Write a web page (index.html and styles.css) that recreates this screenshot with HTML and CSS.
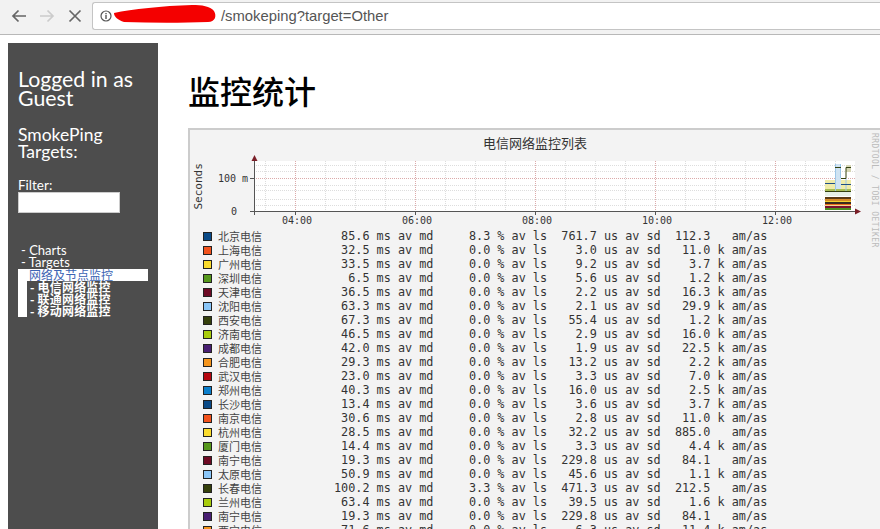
FILE: index.html
```html
<!DOCTYPE html>
<html lang="zh-CN">
<head>
  <title>SmokePing</title>
  <meta charset="utf-8"/>
  <link rel="stylesheet" href="styles.css">
</head>
<body>
  <div class="toolbar">
    <svg class="nav" width="90" height="34" viewBox="0 0 90 34">
      <path d="M25 16H12M17.500 10.500L12 16l5.500 5.500" fill="none" stroke="#666" stroke-width="1.700"/>
      <path d="M39 16H52M46.500 10.500L52 16l-5.500 5.500" fill="none" stroke="#ccc" stroke-width="1.700"/>
      <path d="M68.500 10.500l11 11M79.500 10.500l-11 11" fill="none" stroke="#666" stroke-width="1.700"/>
    </svg>
    <div class="urlbar">
      <svg class="info" width="12" height="12" viewBox="0 0 12 12">
        <circle cx="6" cy="6" r="5" fill="none" stroke="#555" stroke-width="1.200"/>
        <path d="M6 5v4M6 3v1.200" stroke="#555" stroke-width="1.400"/>
      </svg>
      <span class="url">/smokeping?target=Other</span>
      <svg class="scribble" width="106" height="20" viewBox="0 0 106 20">
        <path d="M2 9C20 5 50 2 80 1c10 0 18 1 22 6 3 5 1 11-6 11C70 19 40 19 12 18 6 16 2 13 2 9z" fill="#f40000"/>
      </svg>
    </div>
  </div>

  <div class="page">
    <aside class="sidebar">
      <h2 class="login">Logged in as Guest</h2>
      <h3 class="targets">SmokePing Targets:</h3>
      <label class="filter-label" for="filter">Filter:</label>
      <input class="filter" id="filter" type="text">
      <ul class="menu">
        <li>- Charts</li>
        <li>- Targets</li>
      </ul>
      <div class="submenu">
        <div class="current">网络及节点监控</div>
        <ul class="children">
          <li>- 电信网络监控</li>
          <li>- 联通网络监控</li>
          <li>- 移动网络监控</li>
        </ul>
      </div>
    </aside>

    <main class="content">
      <h1 class="title">监控统计</h1>
      <section class="graph">
        <div class="graph-title">电信网络监控列表</div>
        <div class="rrdtool">RRDTOOL / TOBI OETIKER</div>
        <svg class="plot" width="690" height="76" viewBox="0 0 690 76">
          <rect x="64" y="10" width="601" height="50" fill="#fff"/>
          <g stroke="#ddd" stroke-dasharray="1 1">
            <path d="M64 14.500H665M64 20.500H665M64 34.500H665M64 39.500H665M64 48.500H665M64 54.500H665"/>
            <path d="M75.500 10V60M135.500 10V60M165.500 10V60M195.500 10V60M255.500 10V60M285.500 10V60M315.500 10V60M375.500 10V60M405.500 10V60M435.500 10V60M495.500 10V60M525.500 10V60M555.500 10V60M615.500 10V60M645.500 10V60"/>
          </g>
          <g stroke="#dcaaaa" stroke-dasharray="1 1">
            <path d="M64 27.500H665"/>
            <path d="M105.500 10V60M225.500 10V60M345.500 10V60M465.500 10V60M585.500 10V60"/>
          </g>
          <rect x="635" y="29" width="26" height="12" fill="#efeba8"/>
          <rect x="645" y="13" width="6" height="28" fill="#cfe3f2"/>
          <rect x="656" y="14" width="5" height="7" fill="#d6d6b4"/>
          <rect x="635" y="38" width="26" height="3" fill="#a7bd55"/>
          <rect x="635" y="41" width="26" height="4" fill="#e6f0e6"/>
          <g fill="none">
            <path d="M645.500 13v28M650.500 13v14M656 27v13" stroke="#9cc7e8"/>
            <path d="M645 16.500h6M651 27.500h5M656 27V16.500h5M635 40.500h26" stroke="#33400f"/>
            <path d="M635 32.500h10M651 33.500h10" stroke="#1f4f85"/>
          </g>
          <rect x="635" y="46" width="26" height="2" fill="#5a3a14"/>
          <rect x="635" y="48" width="26" height="2" fill="#d48a28"/>
          <rect x="635" y="50" width="26" height="1" fill="#f2d030"/>
          <rect x="635" y="51" width="26" height="2" fill="#3a2a20"/>
          <rect x="635" y="53" width="26" height="1" fill="#e86a20"/>
          <rect x="635" y="54" width="26" height="1" fill="#f2d78a"/>
          <rect x="635" y="55" width="26" height="2" fill="#7a1030"/>
          <rect x="635" y="57" width="26" height="2" fill="#4a8f20"/>
          <g fill="none" stroke="#555">
            <path d="M60 60.500H666M64.500 10V64M60 27.500H64"/>
            <path d="M105.500 60v4M225.500 60v4M345.500 60v4M465.500 60v4M585.500 60v4"/>
          </g>
          <path d="M64.500 4l-3 6h6z" fill="#7a1f28"/>
          <path d="M671 60.500l-6-3v6z" fill="#7a1f28"/>
          <text class="axis seconds" x="12" y="58.500" transform="rotate(-90 12 58.500)">Seconds</text>
          <text class="axis" x="28" y="31">100 m</text>
          <text class="axis" x="41" y="64">0</text>
          <text class="axis" x="92" y="73">04:00</text>
          <text class="axis" x="212" y="73">06:00</text>
          <text class="axis" x="332" y="73">08:00</text>
          <text class="axis" x="452" y="73">10:00</text>
          <text class="axis" x="572" y="73">12:00</text>
        </svg>
        <div class="legend">
          <div class="row"><i class="sw c1"></i><span class="name">北京电信</span><pre> 85.6 ms av md     8.3 % av ls  761.7 us av sd  112.3   am/as</pre></div>
          <div class="row"><i class="sw c2"></i><span class="name">上海电信</span><pre> 32.5 ms av md     0.0 % av ls    3.0 us av sd   11.0 k am/as</pre></div>
          <div class="row"><i class="sw c3"></i><span class="name">广州电信</span><pre> 33.5 ms av md     0.0 % av ls    9.2 us av sd    3.7 k am/as</pre></div>
          <div class="row"><i class="sw c4"></i><span class="name">深圳电信</span><pre>  6.5 ms av md     0.0 % av ls    5.6 us av sd    1.2 k am/as</pre></div>
          <div class="row"><i class="sw c5"></i><span class="name">天津电信</span><pre> 36.5 ms av md     0.0 % av ls    2.2 us av sd   16.3 k am/as</pre></div>
          <div class="row"><i class="sw c6"></i><span class="name">沈阳电信</span><pre> 63.3 ms av md     0.0 % av ls    2.1 us av sd   29.9 k am/as</pre></div>
          <div class="row"><i class="sw c7"></i><span class="name">西安电信</span><pre> 67.3 ms av md     0.0 % av ls   55.4 us av sd    1.2 k am/as</pre></div>
          <div class="row"><i class="sw c8"></i><span class="name">济南电信</span><pre> 46.5 ms av md     0.0 % av ls    2.9 us av sd   16.0 k am/as</pre></div>
          <div class="row"><i class="sw c9"></i><span class="name">成都电信</span><pre> 42.0 ms av md     0.0 % av ls    1.9 us av sd   22.5 k am/as</pre></div>
          <div class="row"><i class="sw c10"></i><span class="name">合肥电信</span><pre> 29.3 ms av md     0.0 % av ls   13.2 us av sd    2.2 k am/as</pre></div>
          <div class="row"><i class="sw c11"></i><span class="name">武汉电信</span><pre> 23.0 ms av md     0.0 % av ls    3.3 us av sd    7.0 k am/as</pre></div>
          <div class="row"><i class="sw c12"></i><span class="name">郑州电信</span><pre> 40.3 ms av md     0.0 % av ls   16.0 us av sd    2.5 k am/as</pre></div>
          <div class="row"><i class="sw c1"></i><span class="name">长沙电信</span><pre> 13.4 ms av md     0.0 % av ls    3.6 us av sd    3.7 k am/as</pre></div>
          <div class="row"><i class="sw c2"></i><span class="name">南京电信</span><pre> 30.6 ms av md     0.0 % av ls    2.8 us av sd   11.0 k am/as</pre></div>
          <div class="row"><i class="sw c3"></i><span class="name">杭州电信</span><pre> 28.5 ms av md     0.0 % av ls   32.2 us av sd  885.0   am/as</pre></div>
          <div class="row"><i class="sw c4"></i><span class="name">厦门电信</span><pre> 14.4 ms av md     0.0 % av ls    3.3 us av sd    4.4 k am/as</pre></div>
          <div class="row"><i class="sw c5"></i><span class="name">南宁电信</span><pre> 19.3 ms av md     0.0 % av ls  229.8 us av sd   84.1   am/as</pre></div>
          <div class="row"><i class="sw c6"></i><span class="name">太原电信</span><pre> 50.9 ms av md     0.0 % av ls   45.6 us av sd    1.1 k am/as</pre></div>
          <div class="row"><i class="sw c7"></i><span class="name">长春电信</span><pre>100.2 ms av md     3.3 % av ls  471.3 us av sd  212.5   am/as</pre></div>
          <div class="row"><i class="sw c8"></i><span class="name">兰州电信</span><pre> 63.4 ms av md     0.0 % av ls   39.5 us av sd    1.6 k am/as</pre></div>
          <div class="row"><i class="sw c9"></i><span class="name">南宁电信</span><pre> 19.3 ms av md     0.0 % av ls  229.8 us av sd   84.1   am/as</pre></div>
          <div class="row"><i class="sw c10"></i><span class="name">西宁电信</span><pre> 71.6 ms av md     0.0 % av ls    6.3 us av sd   11.4 k am/as</pre></div>
        </div>
      </section>
    </main>
  </div>
</body>
</html>
```

FILE: styles.css
```css
html, body {
  height: 100%;
  margin: 0;
  overflow: hidden;
  background: #fff;
}

/* browser chrome */
.toolbar {
  display: flex;
  align-items: flex-start;
  height: 34px;
  background: #f2f2f2;
  border-bottom: 1px solid #b8b8b8;
}

.nav {
  flex: none;
  width: 92px;
}

.urlbar {
  position: relative;
  display: flex;
  align-items: center;
  flex: 1;
  height: 26px;
  margin-top: 2px;
  background: #fff;
  border: 1px solid #c4c4c4;
  border-right: 0;
  border-radius: 3px 0 0 3px;
  font-family: "Liberation Sans", sans-serif;
  font-size: 14.800px;
  color: #555;
}

.info {
  margin-left: 7px;
}

.url {
  margin-left: 109px;
}

.scribble {
  position: absolute;
  left: 19px;
  top: 1px;
}

.page {
  display: flex;
  align-items: flex-start;
  padding: 8px 0 0 8px;
}

/* left menu */
.sidebar {
  flex: none;
  box-sizing: border-box;
  width: 150px;
  height: 490px;
  padding: 27px 10px 0;
  background: #4d4d4d;
  color: #fff;
  font-family: "Lato", "Noto Sans CJK SC", sans-serif;
}

.login {
  margin: 0;
  font-size: 21.300px;
  font-weight: 400;
  line-height: 19px;
}

.targets {
  margin: 18px 0 0;
  font-size: 17.500px;
  font-weight: 400;
  line-height: 17px;
}

.filter-label {
  display: block;
  margin-top: 18px;
  font-size: 13.500px;
  line-height: 14px;
}

.filter {
  display: block;
  box-sizing: border-box;
  width: 102px;
  height: 21px;
  margin: 0;
  padding: 0;
  background: #fff;
  border: 1px solid #ccc;
}

.menu,
.children {
  margin: 0;
  padding: 0;
  list-style: none;
}

.menu {
  margin: 31px 0 1px 3px;
  font-size: 13px;
  line-height: 12px;
}

.submenu {
  width: 130px;
  background: linear-gradient(#fff, #fff) left top / 9px 100% no-repeat;
  font-family: "Noto Sans CJK SC", sans-serif;
  font-size: 12px;
  line-height: 12px;
}

.current {
  padding-left: 11px;
  background: #fff;
  color: #3c64b4;
}

.children {
  padding-left: 12px;
  font-weight: 700;
  letter-spacing: 0.200px;
}

/* main column */
.content {
  flex: 1;
  min-width: 0;
  padding: 0 0 0 30px;
}

.title {
  margin: 27px 0 18px;
  font-family: "Noto Sans CJK SC", sans-serif;
  font-size: 32px;
  font-weight: 500;
  line-height: 40px;
  color: #000;
}

.graph {
  position: relative;
  box-sizing: border-box;
  height: 420px;
  background: #f3f3f3;
  border-top: 2px solid #ccc;
  border-left: 2px solid #ccc;
  color: #333;
}

.graph-title {
  padding: 5px 0 0;
  text-align: center;
  font-family: "Noto Sans CJK SC", sans-serif;
  font-size: 13px;
  line-height: 16px;
}

.rrdtool {
  position: absolute;
  top: 3px;
  right: 1px;
  writing-mode: vertical-rl;
  white-space: nowrap;
  font-family: "DejaVu Sans Mono", monospace;
  font-size: 8px;
  letter-spacing: 0.400px;
  color: #bbb;
}

.plot {
  display: block;
}

.axis {
  font-family: "DejaVu Sans Mono", monospace;
  font-size: 10px;
  fill: #333;
}

.seconds {
  font-size: 11px;
}

.legend {
  padding: 2px 0 0 13px;
}

.row {
  display: flex;
  align-items: center;
  height: 14px;
}

.sw {
  flex: none;
  box-sizing: border-box;
  width: 9px;
  height: 9px;
  border: 1px solid #222;
}

.name {
  flex: none;
  width: 116px;
  padding-left: 6px;
  font-family: "Noto Sans CJK SC", sans-serif;
  font-size: 11px;
  color: #444;
}

.row pre {
  margin: 0;
  font-family: "DejaVu Sans Mono", monospace;
  font-size: 11.800px;
  line-height: 14px;
}

.c1 { background: #0a4a87; }
.c2 { background: #f2521c; }
.c3 { background: #fbdc2d; }
.c4 { background: #56981c; }
.c5 { background: #6d0a24; }
.c6 { background: #8ac6f8; }
.c7 { background: #35400c; }
.c8 { background: #a8cc0c; }
.c9 { background: #481e72; }
.c10 { background: #f5951d; }
.c11 { background: #b5060f; }
.c12 { background: #0a7ecb; }
```
